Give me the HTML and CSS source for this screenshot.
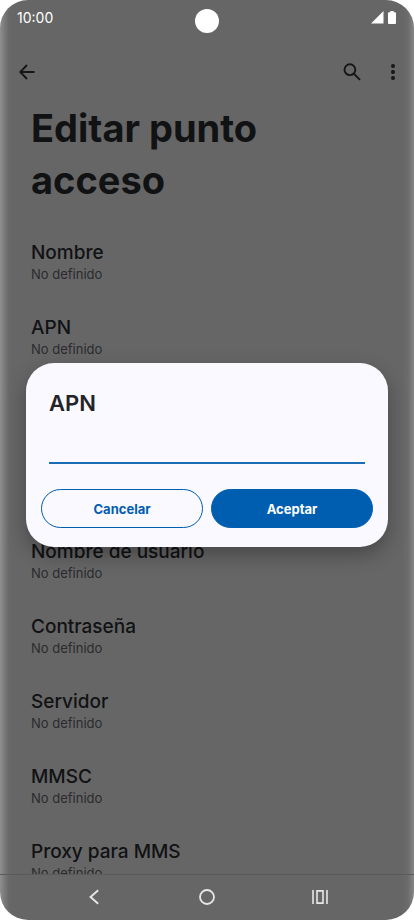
FILE: index.html
```html
<!DOCTYPE html>
<html lang="es">
<head>
<meta charset="utf-8">
<meta name="viewport" content="width=device-width, initial-scale=1">
<title>Editar punto acceso</title>
<link rel="stylesheet" href="styles.css">
</head>
<body>
<div class="phone">
  <header class="status">
    <time class="clock">10:00</time>
    <span class="camera"></span>
    <span class="indicators">
      <svg width="13" height="13" viewBox="0 0 13 13" fill="#fff" aria-hidden="true"><path d="M12.500 0V12.500H0z"/></svg>
      <svg width="8" height="13" viewBox="0 0 8 13" fill="#fff" aria-hidden="true"><path d="M2.300 0h3.400v1.300H7a1 1 0 0 1 1 1V12a1 1 0 0 1-1 1H1a1 1 0 0 1-1-1V2.300a1 1 0 0 1 1-1h1.300z"/></svg>
    </span>
  </header>
  <div class="toolbar">
    <button class="icon-button" type="button" aria-label="Atrás">
      <svg width="16" height="16" viewBox="0 0 16 16" fill="none" stroke="#151618" stroke-width="1.900" aria-hidden="true"><path d="M15.500 8H1.500M8 1L1.300 8 8 15"/></svg>
    </button>
    <span class="spacer"></span>
    <button class="icon-button" type="button" aria-label="Buscar">
      <svg width="18" height="18" viewBox="0 0 18 18" fill="none" stroke="#151618" stroke-width="1.900" aria-hidden="true"><circle cx="6.900" cy="6.700" r="5.400"/><path d="M10.700 10.500l6.300 6.300"/></svg>
    </button>
    <button class="icon-button" type="button" aria-label="Más opciones">
      <svg width="4" height="16" viewBox="0 0 4 16" fill="#151618" aria-hidden="true"><circle cx="2" cy="2" r="2"/><circle cx="2" cy="8" r="2"/><circle cx="2" cy="14" r="2"/></svg>
    </button>
  </div>
  <main class="content">
    <h1 class="title">Editar punto acceso</h1>
    <ul class="settings">
      <li><span class="name">Nombre</span><span class="value">No definido</span></li>
      <li><span class="name">APN</span><span class="value">No definido</span></li>
    </ul>
    <ul class="settings credentials">
      <li><span class="name">Nombre de usuario</span><span class="value">No definido</span></li>
      <li><span class="name">Contraseña</span><span class="value">No definido</span></li>
      <li><span class="name">Servidor</span><span class="value">No definido</span></li>
      <li><span class="name">MMSC</span><span class="value">No definido</span></li>
      <li><span class="name">Proxy para MMS</span><span class="value">No definido</span></li>
    </ul>
  </main>
  <nav class="navbar" aria-label="Sistema">
    <button class="icon-button" type="button" aria-label="Volver">
      <svg width="10" height="16" viewBox="0 0 10 16" fill="none" stroke="#e6e6e6" stroke-width="1.900" aria-hidden="true"><path d="M9.200 1.200L1.500 8l7.700 6.800"/></svg>
    </button>
    <button class="icon-button" type="button" aria-label="Inicio">
      <svg width="16" height="16" viewBox="0 0 16 16" fill="none" stroke="#e6e6e6" stroke-width="1.800" aria-hidden="true"><circle cx="8" cy="8" r="7"/></svg>
    </button>
    <button class="icon-button" type="button" aria-label="Recientes">
      <svg width="16" height="14" viewBox="0 0 16 14" fill="none" stroke="#e6e6e6" stroke-width="1.600" aria-hidden="true"><path d="M1 0v14M15 0v14M5 .9h6v12.200H5z"/></svg>
    </button>
  </nav>
  <div class="overlay">
    <form class="dialog" role="dialog" aria-labelledby="apn-label">
      <label class="dialog-title" id="apn-label" for="apn">APN</label>
      <input class="field" id="apn" type="text">
      <div class="actions">
        <button class="button outlined" type="button">Cancelar</button>
        <button class="button filled" type="button">Aceptar</button>
      </div>
    </form>
  </div>
</div>
</body>
</html>
```

FILE: styles.css
```css
* {
  box-sizing: border-box;
}

body {
  margin: 0;
  background: #fff;
  color: #111214;
  font-family: Inter, "Liberation Sans", sans-serif;
}

button,
input {
  font: inherit;
}

.phone {
  position: relative;
  display: flex;
  flex-direction: column;
  height: 100vh;
  overflow: hidden;
  border-radius: 28px;
  background: linear-gradient(to right, #909090, #7c7c7c 4px, #686868 9px, #666 14px, #666 calc(100% - 12px), #6c6c6c calc(100% - 6px), #868686);
}

.status {
  display: grid;
  grid-template-columns: 1fr auto 1fr;
  padding: 9px 18px 0 17px;
  color: #fff;
}

.clock {
  font-size: 14px;
  line-height: 18px;
}

.camera {
  width: 24px;
  height: 24px;
  border-radius: 50%;
  background: #fff;
}

.indicators {
  display: flex;
  justify-content: flex-end;
  gap: 4px;
  padding-top: 2px;
}

.toolbar {
  display: flex;
  align-items: center;
  gap: 17px;
  height: 48px;
  margin-top: 15px;
  padding: 0 9px 0 15px;
}

.spacer {
  flex: 1;
}

.icon-button {
  display: grid;
  place-items: center;
  width: 24px;
  height: 24px;
  padding: 0;
  border: 0;
  background: none;
}

.content {
  flex: 1;
  min-height: 0;
  overflow: hidden;
  padding: 6px 31px 0;
}

.title {
  margin: 0;
  font-size: 38px;
  font-weight: 700;
  line-height: 52px;
}

.settings {
  display: grid;
  gap: 33px;
  margin: 35px 0 0;
  padding: 0;
  list-style: none;
}

.credentials {
  margin-top: 182px;
}

.name,
.value {
  display: block;
}

.name {
  font-size: 19px;
  font-weight: 500;
  line-height: 24px;
}

.value {
  color: #2b2b2d;
  font-size: 13px;
  line-height: 18px;
}

.navbar {
  display: flex;
  align-items: center;
  justify-content: space-between;
  height: 46px;
  padding: 0 82px 2px;
  border-top: 1px solid #5b5b5b;
}

.overlay {
  position: absolute;
  inset: 0;
  display: grid;
  align-items: center;
  padding: 0 26px 10px;
}

.dialog {
  display: flex;
  flex-direction: column;
  padding: 25px 15px 19px;
  border-radius: 28px;
  background: #faf9ff;
  box-shadow: 0 8px 20px rgba(0, 0, 0, 0.3);
}

.dialog-title {
  padding: 0 8px;
  color: #232427;
  font-size: 22px;
  font-weight: 600;
  line-height: 30px;
}

.field {
  height: 40px;
  margin: 6px 8px 25px;
  padding: 0;
  border: 0;
  border-bottom: 2px solid #1a6cb4;
  background: none;
  font-size: 18px;
}

.actions {
  display: grid;
  grid-template-columns: 1fr 1fr;
  gap: 8px;
}

.button {
  height: 39px;
  border: 1px solid #005eb1;
  border-radius: 20px;
  font-size: 13px;
  font-weight: 700;
}

.outlined {
  background: none;
  color: #005eb1;
}

.filled {
  background: #005eb1;
  color: #fff;
}
```
